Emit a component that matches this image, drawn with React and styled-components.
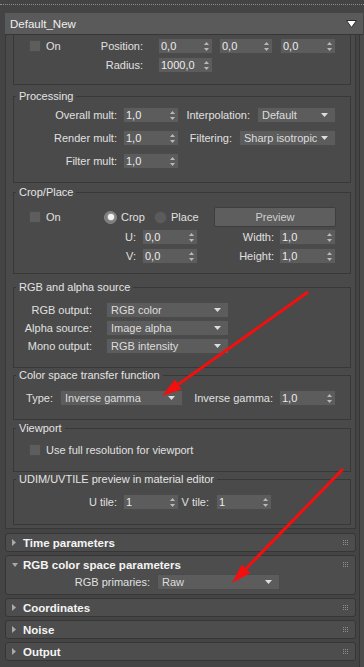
import React from "react";
import styled, { createGlobalStyle } from "styled-components";

const GlobalStyle = createGlobalStyle`
  html, body {
    margin: 0;
    padding: 0;
    background: #444444;
  }
  body {
    font-family: "Liberation Sans", Arial, sans-serif;
    font-size: 11px;
    color: #e0e0e0;
  }
`;

const Page = styled.div`
  position: relative;
  width: 364px;
  height: 667px;
  overflow: hidden;
  background: #444444;
`;

const Dotted = styled.div`
  margin-top: 4px;
  border-top: 1px dotted #8e8e8e;
`;

const Header = styled.div`
  margin: 8px 1px 0 5px;
  height: 21px;
  background: #5a5a5a;
  border-bottom: 1px solid #363636;
  display: flex;
  align-items: center;
  justify-content: space-between;
  padding: 0 6px 0 5px;
  font-size: 11.5px;
  color: #efefef;
`;

const Workspace = styled.div`
  display: flex;
  margin-left: 5px;
`;

const Main = styled.div`
  width: 351px;
  flex: none;
`;

const Track = styled.div`
  margin-left: 3px;
  width: 5px;
  height: 640px;
  background: #4b4b4b;
  border-left: 1px solid #363636;
`;

const Panel = styled.div`
  background: #4a4a4a;
  border: 1px solid #383838;
  border-top: none;
  padding: 0 4px 3px 7px;
`;

const TopGroup = styled.div`
  border: 1px solid #383838;
  border-top: none;
  padding: 3px 0 11px;
`;

const Group = styled.fieldset`
  margin: ${p => p.$mt || 0}px 0 0;
  padding: ${p => p.$pt}px 0 ${p => p.$pb}px;
  border: 1px solid #383838;
  min-width: 0;
`;

const Legend = styled.legend`
  margin-left: 2px;
  padding: 0 3px;
  line-height: 14px;
  font-size: 11px;
  color: #e4e4e4;
`;

const Row = styled.div`
  display: flex;
  align-items: center;
  height: ${p => p.$h || 16}px;
  margin-top: ${p => p.$mt || 0}px;
  padding-left: ${p => p.$pl || 0}px;
`;

const Label = styled.span`
  flex: none;
  width: ${p => p.$w}px;
  margin-left: ${p => p.$ml || 0}px;
  text-align: ${p => (p.$left ? "left" : "right")};
  white-space: nowrap;
`;

const Field = styled.div`
  flex: none;
  box-sizing: border-box;
  display: flex;
  align-items: center;
  justify-content: space-between;
  width: ${p => p.$w}px;
  height: 16px;
  margin-left: ${p => p.$ml || 0}px;
  padding: 0 ${p => (p.$drop ? 7 : 3)}px 0 ${p => (p.$drop ? 4 : 2)}px;
  background: #5c5c5c;
  border: 1px solid #4b4b4b;
  color: ${p => (p.$drop ? "#dcdcdc" : "#ececec")};
  white-space: nowrap;
`;

const Check = styled.span`
  flex: none;
  box-sizing: border-box;
  width: 12px;
  height: 12px;
  background: #5d5d5d;
  border: 1px solid #4c4c4c;
`;

const Option = styled.div`
  flex: none;
  display: flex;
  align-items: center;
  width: ${p => p.$w}px;
  gap: 4px;
`;

const Radio = styled.span`
  flex: none;
  box-sizing: border-box;
  width: 13px;
  height: 13px;
  border-radius: 50%;
  display: flex;
  align-items: center;
  justify-content: center;
  background: ${p => (p.$on ? "#7a7a7a" : "#5b5b5b")};
  border: 1px solid ${p => (p.$on ? "#8a8a8a" : "#4f4f4f")};
  &::after {
    content: "";
    display: ${p => (p.$on ? "block" : "none")};
    width: 6px;
    height: 6px;
    border-radius: 50%;
    background: #f2f2f2;
    box-shadow: 0 0 2px #ffffff;
  }
`;

const Button = styled.div`
  flex: none;
  box-sizing: border-box;
  width: 122px;
  height: 20px;
  display: flex;
  align-items: center;
  justify-content: center;
  background: #5e5e5e;
  border: 1px solid #3e3e3e;
  border-radius: 2px;
  color: #cfcfcf;
`;

const Rollout = styled.div`
  margin-top: ${p => p.$mt || 3}px;
  background: #4d4d4d;
  border: 1px solid #363636;
  border-radius: 3px;
  padding-bottom: ${p => p.$pb || 0}px;
`;

const RollHead = styled.div`
  height: 17px;
  display: flex;
  align-items: center;
  padding: 0 7px 0 6px;
`;

const RollTitle = styled.span`
  margin-left: ${p => p.$ml}px;
  font-weight: bold;
  font-size: 11.5px;
  color: #f4f4f4;
  flex: 1;
`;

const Overlay = styled.svg`
  position: absolute;
  left: 0;
  top: 0;
  pointer-events: none;
`;

const SpinIcon = () => (
  <svg width="5" height="9" viewBox="0 0 5 9">
    <polygon points="2.5,0 5,3 0,3" fill="#b9b9b9" />
    <polygon points="0,6 5,6 2.5,9" fill="#b9b9b9" />
  </svg>
);

const DropIcon = () => (
  <svg width="7" height="4" viewBox="0 0 7 4">
    <polygon points="0,0 7,0 3.5,4" fill="#dddddd" />
  </svg>
);

const Dots = () => (
  <svg width="5" height="5" viewBox="0 0 5 5">
    {[0, 2, 4].map(y =>
      [0, 2, 4].map(x => <rect key={x + "-" + y} x={x} y={y} width="1" height="1" fill="#8f8f8f" />)
    )}
  </svg>
);

const Spinner = ({ w, ml, value }) => (
  <Field $w={w} $ml={ml}>
    <span>{value}</span>
    <SpinIcon />
  </Field>
);

const Select = ({ w, ml, value }) => (
  <Field $w={w} $ml={ml} $drop>
    <span>{value}</span>
    <DropIcon />
  </Field>
);

const Section = ({ title, open, children }) => (
  <Rollout $pb={open ? 4 : 0}>
    <RollHead>
      {open ? (
        <svg width="6" height="4" viewBox="0 0 6 4">
          <polygon points="0,0 6,0 3,4" fill="#a9a9a9" />
        </svg>
      ) : (
        <svg width="4" height="7" viewBox="0 0 4 7">
          <polygon points="0,0 4,3.5 0,7" fill="#a9a9a9" />
        </svg>
      )}
      <RollTitle $ml={open ? 5 : 7}>{title}</RollTitle>
      <Dots />
    </RollHead>
    {children}
  </Rollout>
);

const arrows = [
  { from: [308, 292], base: [178.3, 384.4], a: [181.8, 389.3], tip: [162, 396], b: [174.8, 379.5] },
  { from: [343, 469], base: [246, 568.7], a: [250.3, 572.9], tip: [232, 583], b: [241.7, 564.5] },
];

export default function App() {
  return (
    <Page>
      <GlobalStyle />
      <Dotted />
      <Header>
        <span>Default_New</span>
        <svg width="11" height="8" viewBox="0 0 11 8">
          <polygon points="0.5,0.5 10.5,0.5 5.5,7.5" fill="#ffffff" stroke="#2e2e2e" strokeWidth="1" />
        </svg>
      </Header>
      <Workspace>
        <Main>
          <Panel>
            <TopGroup>
              <Row $pl={15}>
                <Check />
                <Label $w={30} $ml={5} $left>On</Label>
                <Label $w={67}>Position:</Label>
                <Spinner w={55} ml={15} value="0,0" />
                <Spinner w={54} ml={6} value="0,0" />
                <Spinner w={56} ml={7} value="0,0" />
              </Row>
              <Row $mt={3}>
                <Label $w={129}>Radius:</Label>
                <Spinner w={55} ml={15} value="1000,0" />
              </Row>
            </TopGroup>

            <Group $mt={4} $pt={4} $pb={13}>
              <Legend>Processing</Legend>
              <Row>
                <Label $w={103}>Overall mult:</Label>
                <Spinner w={56} ml={6} value="1,0" />
                <Label $w={71}>Interpolation:</Label>
                <Select w={79} ml={7} value="Default" />
              </Row>
              <Row $mt={7}>
                <Label $w={103}>Render mult:</Label>
                <Spinner w={56} ml={6} value="1,0" />
                <Label $w={53}>Filtering:</Label>
                <Select w={97} ml={7} value="Sharp isotropic" />
              </Row>
              <Row $mt={7}>
                <Label $w={103}>Filter mult:</Label>
                <Spinner w={56} ml={6} value="1,0" />
              </Row>
            </Group>

            <Group $mt={2} $pt={8} $pb={9}>
              <Legend>Crop/Place</Legend>
              <Row $h={20} $pl={15}>
                <Check />
                <Label $w={58} $ml={5} $left>On</Label>
                <Option $w={50}>
                  <Radio $on />
                  <span>Crop</span>
                </Option>
                <Option $w={60}>
                  <Radio />
                  <span>Place</span>
                </Option>
                <Button>Preview</Button>
              </Row>
              <Row $mt={2}>
                <Label $w={122}>U:</Label>
                <Spinner w={56} ml={6} value="0,0" />
                <Label $w={76}>Width:</Label>
                <Spinner w={57} ml={5} value="1,0" />
              </Row>
              <Row $mt={3}>
                <Label $w={122}>V:</Label>
                <Spinner w={56} ml={6} value="0,0" />
                <Label $w={76}>Height:</Label>
                <Spinner w={57} ml={5} value="1,0" />
              </Row>
            </Group>

            <Group $mt={6} $pt={8} $pb={13}>
              <Legend>RGB and alpha source</Legend>
              <Row>
                <Label $w={78}>RGB output:</Label>
                <Select w={123} ml={14} value="RGB color" />
              </Row>
              <Row $mt={2}>
                <Label $w={78}>Alpha source:</Label>
                <Select w={123} ml={14} value="Image alpha" />
              </Row>
              <Row $mt={2}>
                <Label $w={78}>Mono output:</Label>
                <Select w={123} ml={14} value="RGB intensity" />
              </Row>
            </Group>

            <Group $mt={0} $pt={8} $pb={13}>
              <Legend>Color space transfer function</Legend>
              <Row>
                <Label $w={39}>Type:</Label>
                <Select w={123} ml={7} value="Inverse gamma" />
                <Label $w={90}>Inverse gamma:</Label>
                <Spinner w={57} ml={6} value="1,0" />
              </Row>
            </Group>

            <Group $mt={1} $pt={7} $pb={13}>
              <Legend>Viewport</Legend>
              <Row $pl={15}>
                <Check />
                <Label $w={200} $ml={5} $left>Use full resolution for viewport</Label>
              </Row>
            </Group>

            <Group $mt={0} $pt={8} $pb={14}>
              <Legend>UDIM/UVTILE preview in material editor</Legend>
              <Row>
                <Label $w={103}>U tile:</Label>
                <Spinner w={56} ml={6} value="1" />
                <Label $w={30}>V tile:</Label>
                <Spinner w={56} ml={7} value="1" />
              </Row>
            </Group>
          </Panel>

          <Rollout $mt={4}>
            <RollHead>
              <svg width="4" height="7" viewBox="0 0 4 7">
                <polygon points="0,0 4,3.5 0,7" fill="#a9a9a9" />
              </svg>
              <RollTitle $ml={7}>Time parameters</RollTitle>
              <Dots />
            </RollHead>
          </Rollout>
          <Section title="RGB color space parameters" open>
            <Row $mt={1}>
              <Label $w={144}>RGB primaries:</Label>
              <Select w={123} ml={7} value="Raw" />
            </Row>
          </Section>
          <Section title="Coordinates" />
          <Section title="Noise" />
          <Section title="Output" />
        </Main>
        <Track />
      </Workspace>

      <Overlay width="364" height="667" viewBox="0 0 364 667">
        {arrows.map((a, i) => (
          <g key={i}>
            <line x1={a.from[0]} y1={a.from[1]} x2={a.base[0]} y2={a.base[1]} stroke="#f40f0f" strokeWidth="3" />
            <polygon
              points={`${a.a[0]},${a.a[1]} ${a.tip[0]},${a.tip[1]} ${a.b[0]},${a.b[1]}`}
              fill="#f40f0f"
            />
          </g>
        ))}
      </Overlay>
    </Page>
  );
}
